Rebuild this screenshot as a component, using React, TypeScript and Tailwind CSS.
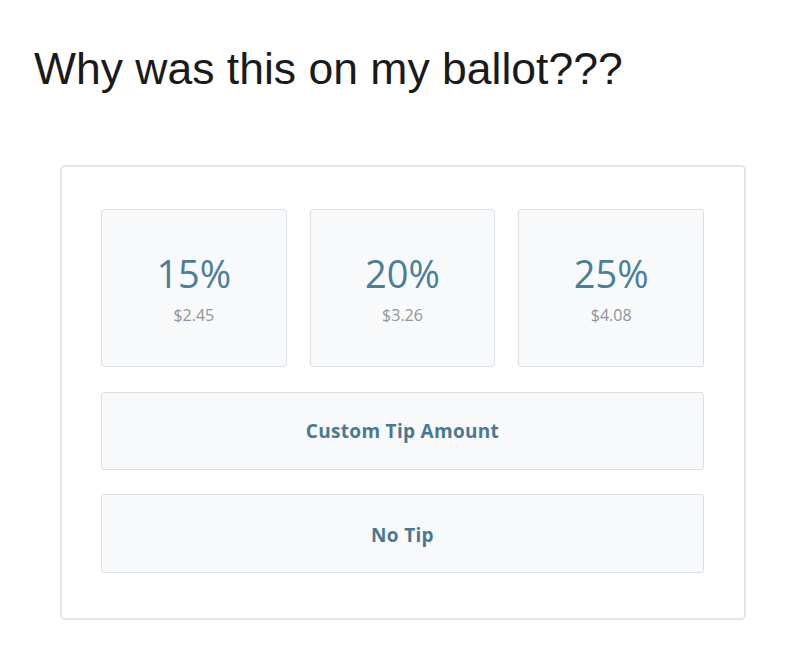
export default function App() {
  const tips = [
    { pct: "15%", amt: "$2.45" },
    { pct: "20%", amt: "$3.26" },
    { pct: "25%", amt: "$4.08" },
  ];

  return (
    <div className="w-[800px] h-[650px] bg-white font-['Liberation_Sans',Arial,sans-serif]">
      <h1 className="pl-[34px] pt-[43px] text-[44.5px] leading-[52px] text-[#1a1a1a]">
        Why was this on my ballot???
      </h1>
      <div className="ml-[60px] mt-[70px] w-[686px] h-[455px] rounded-[5px] border-2 border-[#e3e5e8] bg-white pl-[39px] pr-[40px] pt-[42px] font-['Open_Sans',sans-serif]">
        <div className="grid grid-cols-3 gap-[23px]">
          {tips.map((t) => (
            <button
              key={t.pct}
              className="h-[158px] rounded-[3px] border border-[#dcdfe3] bg-[#f8f9fb] flex flex-col items-center justify-center pt-[2px]"
            >
              <span className="text-[38px] leading-[40px] text-[#4a7f98]">{t.pct}</span>
              <span className="mt-[12px] text-[16px] leading-[20px] text-[#8e949a]">{t.amt}</span>
            </button>
          ))}
        </div>
        <button className="mt-[25px] w-full h-[78px] rounded-[3px] border border-[#dcdfe3] bg-[#f8f9fb] text-[19px] tracking-[0.3px] font-bold text-[#4a7890]">
          Custom Tip Amount
        </button>
        <button className="mt-[24px] w-full h-[79px] rounded-[3px] border border-[#dcdfe3] bg-[#f8f9fb] text-[19px] tracking-[0.3px] font-bold text-[#4a7890] pt-[4px]">
          No Tip
        </button>
      </div>
    </div>
  );
}
